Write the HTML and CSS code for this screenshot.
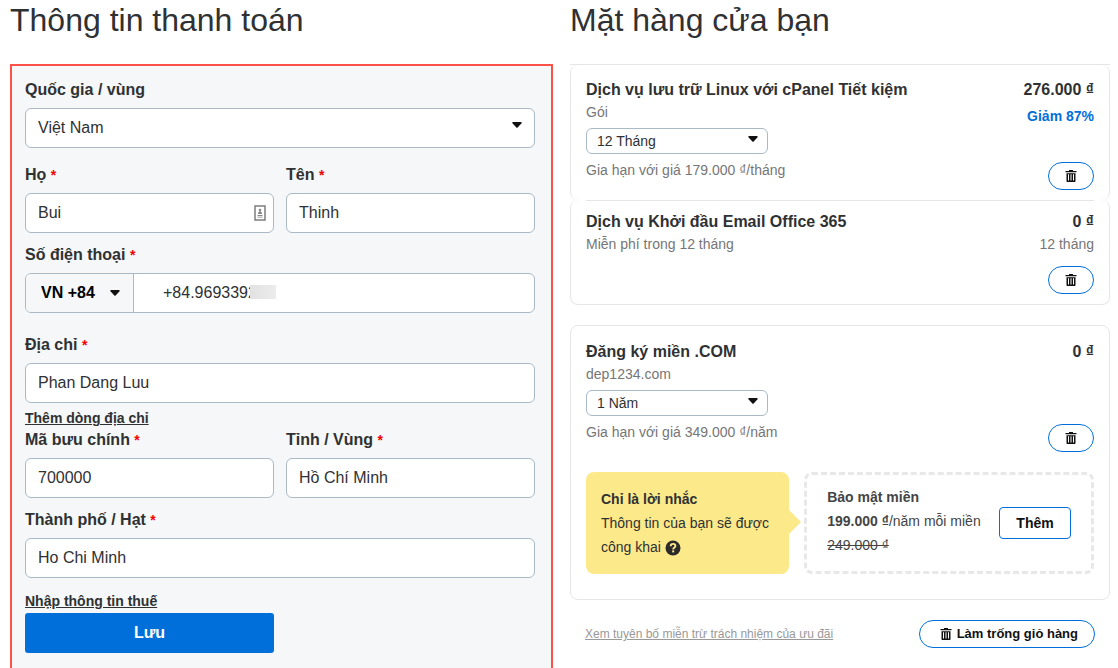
FILE: index.html
```html
<!DOCTYPE html>
<html lang="vi">
<head>
  <meta charset="UTF-8">
  <meta name="viewport" content="width=device-width, initial-scale=1.0">
  <title>Thông tin thanh toán</title>
  <link rel="stylesheet" href="styles.css">
</head>
<body>
  <!-- Shared icons -->
  <svg class="sprite" aria-hidden="true">
    <symbol id="icon-caret" viewBox="0 0 10 6">
      <path d="M1 0h8a.8.8 0 0 1 .6 1.3L5.6 5.6a.8.8 0 0 1-1.2 0L.4 1.3A.8.8 0 0 1 1 0z" fill="currentColor"/>
    </symbol>
    <symbol id="icon-trash" viewBox="0 0 12 14">
      <path d="M4 1h4v1h3.500v1.300H.5V2H4z" fill="currentColor"/>
      <path fill-rule="evenodd" d="M1.500 4.300h9v8a.8.8 0 0 1-.8.800H2.300a.8.8 0 0 1-.8-.8zM3 5.300v6.300h1V5.300zM5.500 5.300v6.300h1V5.300zM8 5.300v6.300h1V5.300z" fill="currentColor"/>
    </symbol>
  </svg>

  <main class="checkout">
    <section class="billing">
      <h1>Thông tin thanh toán</h1>
      <form class="billing-form">
        <div class="field">
          <label for="country">Quốc gia / vùng</label>
          <div class="select-wrap">
            <select id="country" class="control">
              <option>Việt Nam</option>
            </select>
            <svg class="caret"><use href="#icon-caret"/></svg>
          </div>
        </div>

        <div class="row names">
          <div class="field">
            <label for="last-name">Họ <span class="required">*</span></label>
            <div class="input-wrap">
              <input type="text" id="last-name" class="control" value="Bui">
              <svg class="contact-icon" viewBox="0 0 12 16">
                <rect x="1" y="1" width="10" height="14" fill="#fff" stroke="#858585" stroke-width="1.600"/>
                <circle cx="6" cy="5" r="1.300" fill="#858585"/>
                <path d="M4 9c0-2 .8-2.800 2-2.800S8 7 8 9zM3.500 10h5v1h-5zM3.500 11.800h5v.8h-5z" fill="#858585"/>
              </svg>
            </div>
          </div>
          <div class="field">
            <label for="first-name">Tên <span class="required">*</span></label>
            <input type="text" id="first-name" class="control" value="Thinh">
          </div>
        </div>

        <div class="field">
          <label for="phone">Số điện thoại <span class="required">*</span></label>
          <div class="phone">
            <div class="select-wrap phone-code">
              <select aria-label="Mã quốc gia">
                <option>VN +84</option>
              </select>
              <svg class="caret"><use href="#icon-caret"/></svg>
            </div>
            <div class="input-wrap phone-number">
              <input type="tel" id="phone" value="+84.9693392">
              <span class="mask"></span>
            </div>
          </div>
        </div>

        <div class="field address">
          <label for="address">Địa chỉ <span class="required">*</span></label>
          <input type="text" id="address" class="control" value="Phan Dang Luu">
        </div>
        <a href="#" class="form-link add-line">Thêm dòng địa chỉ</a>

        <div class="row">
          <div class="field">
            <label for="postal">Mã bưu chính <span class="required">*</span></label>
            <input type="text" id="postal" class="control" value="700000">
          </div>
          <div class="field">
            <label for="region">Tỉnh / Vùng <span class="required">*</span></label>
            <input type="text" id="region" class="control" value="Hồ Chí Minh">
          </div>
        </div>

        <div class="field city">
          <label for="city">Thành phố / Hạt <span class="required">*</span></label>
          <input type="text" id="city" class="control" value="Ho Chi Minh">
        </div>
        <a href="#" class="form-link tax-info">Nhập thông tin thuế</a>

        <div class="row">
          <button type="submit" class="btn-save">Lưu</button>
        </div>
      </form>
    </section>

    <section class="cart">
      <h1>Mặt hàng cửa bạn</h1>

      <div class="cart-group">
        <article class="item">
          <div class="item-info">
            <h2>Dịch vụ lưu trữ Linux với cPanel Tiết kiệm</h2>
            <p>Gói</p>
            <div class="select-wrap term">
              <select aria-label="Thời hạn gói">
                <option>12 Tháng</option>
              </select>
              <svg class="caret"><use href="#icon-caret"/></svg>
            </div>
            <p>Gia hạn với giá 179.000 ₫/tháng</p>
          </div>
          <div class="item-side">
            <strong class="price">276.000 ₫</strong>
            <span class="discount">Giảm 87%</span>
            <button type="button" class="btn-remove" aria-label="Xóa">
              <svg class="trash"><use href="#icon-trash"/></svg>
            </button>
          </div>
        </article>

        <article class="item last">
          <div class="item-info">
            <h2>Dịch vụ Khởi đầu Email Office 365</h2>
            <p>Miễn phí trong 12 tháng</p>
          </div>
          <div class="item-side">
            <strong class="price">0 ₫</strong>
            <p>12 tháng</p>
            <button type="button" class="btn-remove" aria-label="Xóa">
              <svg class="trash"><use href="#icon-trash"/></svg>
            </button>
          </div>
        </article>
      </div>

      <div class="card">
        <article class="domain">
          <div class="item-info">
            <h2>Đăng ký miền .COM</h2>
            <p>dep1234.com</p>
            <div class="select-wrap term">
              <select aria-label="Thời hạn miền">
                <option>1 Năm</option>
              </select>
              <svg class="caret"><use href="#icon-caret"/></svg>
            </div>
            <p>Gia hạn với giá 349.000 ₫/năm</p>
          </div>
          <div class="item-side">
            <strong class="price">0 ₫</strong>
            <button type="button" class="btn-remove" aria-label="Xóa">
              <svg class="trash"><use href="#icon-trash"/></svg>
            </button>
          </div>
        </article>

        <div class="promo">
          <div class="reminder">
            <strong>Chỉ là lời nhắc</strong>
            <p>Thông tin của bạn sẽ được công khai
              <svg class="help" viewBox="0 0 16 16">
                <circle cx="8" cy="8" r="7.500" fill="#2b2b2b"/>
                <path d="M5.700 6.200c0-1.500 1-2.300 2.400-2.300s2.300.8 2.300 2c0 1.700-2.200 1.700-2.200 3.500" fill="none" stroke="#fce98a" stroke-width="1.900"/>
                <rect x="7.200" y="10.400" width="2" height="2" fill="#fce98a"/>
              </svg>
            </p>
          </div>
          <div class="offer">
            <div class="offer-text">
              <strong>Bảo mật miền</strong>
              <p><strong>199.000 ₫</strong><span class="per">/năm mỗi miền</span></p>
              <s>249.000 ₫</s>
            </div>
            <button type="button" class="btn-add">Thêm</button>
          </div>
        </div>
      </div>

      <footer class="cart-footer">
        <a href="#">Xem tuyên bố miễn trừ trách nhiệm của ưu đãi</a>
        <button type="button" class="btn-empty">
          <svg class="trash"><use href="#icon-trash"/></svg>
          Làm trống giỏ hàng
        </button>
      </footer>
    </section>
  </main>
</body>
</html>
```

FILE: styles.css
```css
:root {
  --text: #2f3133;
  --muted: #767676;
  --blue: #006fd9;
  --line: #e6e6e6;
  --control-border: #a9b9c6;
  --panel-bg: #f5f7f8;
  --yellow: #fce98a;
}

* {
  margin: 0;
  padding: 0;
  box-sizing: border-box;
}

body {
  background-color: #fff;
  color: var(--text);
  font-family: "Liberation Sans", Arial, sans-serif;
  font-size: 16px;
  line-height: 20px;
}

input,
select,
button {
  font: inherit;
  color: inherit;
}

button {
  cursor: pointer;
}

.sprite {
  display: none;
}

.checkout {
  display: grid;
  grid-template-columns: calc(50% - 7px) 1fr;
  gap: 17px;
  padding: 0 8px 0 10px;
}

h1 {
  height: 64px;
  font-size: 32px;
  font-weight: 400;
  line-height: 40px;
}

/* Billing form */
.billing-form {
  padding: 14px 16px 32px 13px;
  border: 2px solid #fc5148;
  background-color: var(--panel-bg);
}

.row {
  display: grid;
  grid-template-columns: 1fr 1fr;
  gap: 12px;
}

.names {
  margin: 17px 0 12px;
}

.field label {
  display: block;
  margin-bottom: 8px;
  font-weight: 700;
}

.required {
  color: #f00000;
  font-size: 14px;
}

.control {
  display: block;
  width: 100%;
  height: 40px;
  padding: 0 12px;
  border: 1px solid var(--control-border);
  border-radius: 6px;
  background-color: #fff;
}

.input-wrap,
.select-wrap {
  position: relative;
}

select {
  appearance: none;
}

.caret {
  position: absolute;
  top: 14px;
  right: 13px;
  width: 10px;
  height: 6px;
  color: #111;
  pointer-events: none;
}

.contact-icon {
  position: absolute;
  top: 12px;
  right: 8px;
  width: 12px;
  height: 16px;
}

.phone {
  display: flex;
  height: 40px;
  border: 1px solid var(--control-border);
  border-radius: 6px;
  background-color: #fff;
  overflow: hidden;
}

.phone-code {
  width: 108px;
  border-right: 1px solid var(--control-border);
}

.phone-code select {
  width: 100%;
  height: 100%;
  padding-left: 15px;
  border: 0;
  background-color: var(--panel-bg);
  color: #000;
  font-weight: 700;
}

.phone-code .caret {
  top: 16px;
}

.phone-number {
  flex: 1;
}

.phone-number input {
  width: 100%;
  height: 100%;
  padding-left: 29px;
  border: 0;
  background: none;
}

.mask {
  position: absolute;
  top: 11px;
  left: 116px;
  width: 26px;
  height: 14px;
  background: linear-gradient(to right, #e2e2e3, #ececed);
}

.address {
  margin-top: 22px;
}

.form-link {
  display: block;
  width: fit-content;
  color: var(--text);
  font-size: 14px;
  font-weight: 700;
}

.add-line {
  margin: 5px 0 2px;
}

.city {
  margin-top: 12px;
}

.tax-info {
  margin: 13px 0 2px;
}

.btn-save {
  height: 40px;
  border: 0;
  border-radius: 3px;
  background-color: var(--blue);
  color: #fff;
  font-weight: 700;
}

/* Cart */
.cart-group {
  border-top: 1px solid var(--line);
}

.item {
  display: flex;
  justify-content: space-between;
  position: relative;
  padding: 15px 15px 10px;
  border: solid var(--line);
  border-width: 0 1px;
  border-radius: 8px;
}

.item.last {
  padding-top: 12px;
  border-bottom-width: 1px;
}

.item.last::before {
  content: "";
  position: absolute;
  top: 0;
  left: 15px;
  right: 15px;
  border-top: 1px solid var(--line);
}

h2 {
  margin-bottom: 2px;
  font-size: 16px;
  line-height: 20px;
}

.item-info p,
.item-side p {
  color: var(--muted);
  font-size: 14px;
}

.term {
  width: 182px;
  margin: 6px 0;
}

.term select {
  display: block;
  width: 100%;
  height: 26px;
  padding-left: 10px;
  border: 1px solid var(--control-border);
  border-radius: 6px;
  background-color: #fff;
  font-size: 14px;
}

.term .caret {
  top: 8px;
  right: 10px;
}

.item-side {
  display: flex;
  flex-direction: column;
  align-items: flex-end;
}

.item-side p {
  margin-top: 2px;
}

.discount {
  margin-top: 6px;
  color: var(--blue);
  font-size: 14px;
  font-weight: 700;
}

.btn-remove {
  display: flex;
  align-items: center;
  justify-content: center;
  width: 46px;
  height: 28px;
  margin-top: 36px;
  border: 1px solid var(--blue);
  border-radius: 14px;
  background-color: #fff;
}

.last .btn-remove {
  margin-top: 12px;
}

.domain .btn-remove {
  margin-top: auto;
}

.trash {
  width: 12px;
  height: 14px;
  color: #111;
}

.card {
  margin-top: 20px;
  padding: 16px 15px 25px;
  border: 1px solid var(--line);
  border-radius: 8px;
}

.domain {
  display: flex;
  justify-content: space-between;
  min-height: 110px;
}

.promo {
  display: flex;
  gap: 15px;
  margin-top: 20px;
  font-size: 14px;
  line-height: 24px;
}

.reminder {
  position: relative;
  flex: 0 0 40%;
  padding: 15px;
  border-radius: 8px;
  background-color: var(--yellow);
}

.reminder::after {
  content: "";
  position: absolute;
  top: 38px;
  left: 100%;
  border: solid transparent;
  border-width: 12px 0 12px 12px;
  border-left-color: var(--yellow);
}

.help {
  width: 16px;
  height: 16px;
  vertical-align: middle;
}

.offer {
  display: flex;
  flex: 1;
  align-items: flex-start;
  justify-content: space-between;
  padding: 10px 20px;
  border: 3px dashed #e8e8e8;
  border-radius: 8px;
  color: #444;
}

.offer-text {
  white-space: nowrap;
}

.btn-add {
  width: 72px;
  height: 32px;
  margin-top: 22px;
  border: 1px solid var(--blue);
  border-radius: 4px;
  background-color: #fff;
  color: #111;
  font-weight: 700;
}

.cart-footer {
  display: flex;
  align-items: center;
  justify-content: space-between;
  margin-top: 20px;
  padding: 0 15px;
}

.cart-footer a {
  color: #999;
  font-size: 12px;
}

.btn-empty {
  display: flex;
  align-items: center;
  gap: 5px;
  height: 28px;
  padding: 0 16px 0 20px;
  border: 1px solid var(--blue);
  border-radius: 14px;
  background-color: #fff;
  color: #111;
  font-size: 13px;
  font-weight: 700;
}
```
